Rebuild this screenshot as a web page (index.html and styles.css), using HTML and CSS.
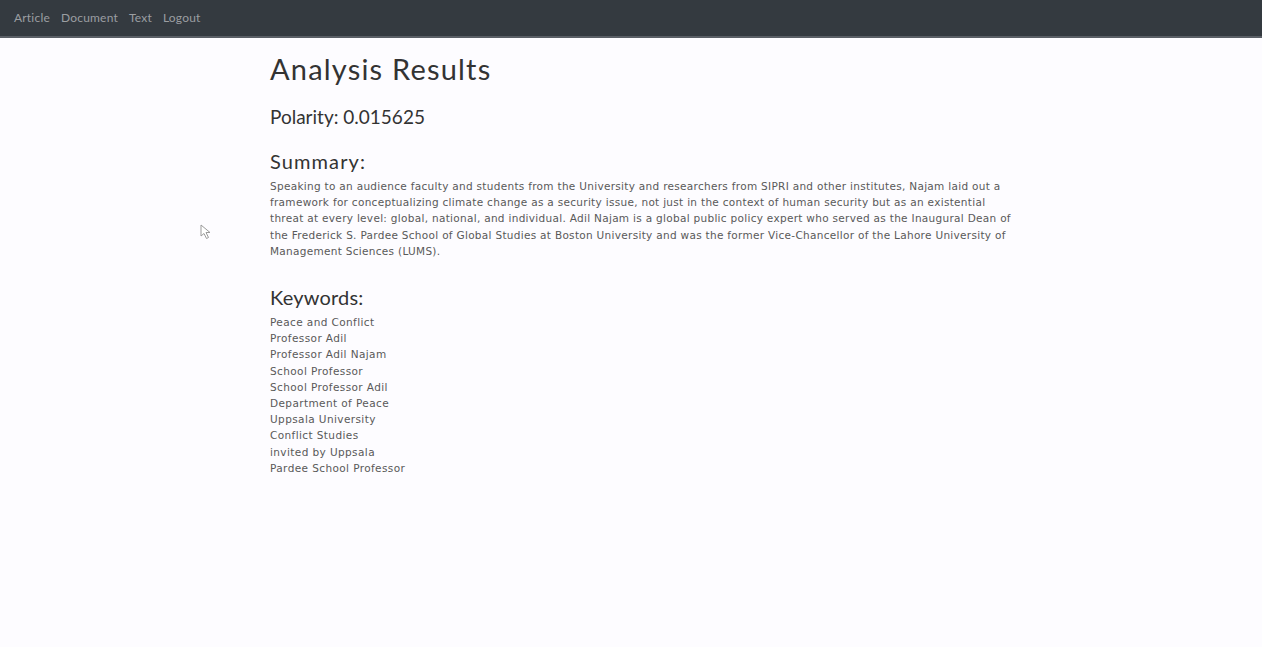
FILE: index.html
```html
<!DOCTYPE html>
<html lang="en">
<head>
<meta charset="utf-8">
<title>Analysis Results</title>
<link rel="stylesheet" href="styles.css">
</head>
<body>
<nav class="navbar">
  <a class="nav-link" href="#">Article</a>
  <a class="nav-link" href="#">Document</a>
  <a class="nav-link" href="#">Text</a>
  <a class="nav-link" href="#">Logout</a>
</nav>
<main class="content">
  <h1 class="title">Analysis Results</h1>
  <h2 class="polarity">Polarity: 0.015625</h2>
  <h3 class="section-title summary-title">Summary:</h3>
  <p class="summary">Speaking to an audience faculty and students from the University and researchers from SIPRI and other institutes, Najam laid out a framework for conceptualizing climate change as a security issue, not just in the context of human security but as an existential threat at every level: global, national, and individual. Adil Najam is a global public policy expert who served as the Inaugural Dean of the Frederick S. Pardee School of Global Studies at Boston University and was the former Vice-Chancellor of the Lahore University of Management Sciences (LUMS).</p>
  <h3 class="section-title keywords-title">Keywords:</h3>
  <ul class="keywords">
    <li>Peace and Conflict</li>
    <li>Professor Adil</li>
    <li>Professor Adil Najam</li>
    <li>School Professor</li>
    <li>School Professor Adil</li>
    <li>Department of Peace</li>
    <li>Uppsala University</li>
    <li>Conflict Studies</li>
    <li>invited by Uppsala</li>
    <li>Pardee School Professor</li>
  </ul>
</main>
<svg class="cursor" width="12" height="16" viewBox="0 0 12 16"><path d="M1 1 L1 12 L4 9.5 L6.5 14.5 L8.5 13.5 L6 8.5 L10 8.5 Z" fill="#fff" stroke="#9a9a9a" stroke-width="1"/></svg>
</body>
</html>
```
FILE: styles.css
```css
html, body {
  margin: 0;
  padding: 0;
}
body {
  background: #fdfcff;
  color: #3a3a3a;
  font-family: "Lato", "Noto Sans", sans-serif;
  min-height: 647px;
  position: relative;
}
.navbar {
  height: 36px;
  background: #343a40;
  border-bottom: 2px solid #5a5f66;
  display: flex;
  align-items: center;
  padding: 0 14px;
  gap: 11px;
  box-sizing: content-box;
}
.nav-link {
  color: #9b9ea2;
  text-decoration: none;
  font-size: 12px;
  letter-spacing: 0.2px;
  margin-top: -1px;
}
.content {
  margin-left: 270px;
  width: 745px;
  padding-top: 13px;
}
.title {
  font-size: 29px;
  font-weight: 400;
  margin: 0;
  line-height: 36px;
  letter-spacing: 1.2px;
  color: #333;
}
.polarity {
  font-size: 19px;
  font-weight: 400;
  margin: 17px 0 0;
  line-height: 26px;
  color: #333;
}
.section-title {
  font-size: 20px;
  font-weight: 400;
  margin: 18px 0 0;
  line-height: 26px;
  color: #333;
}
.summary-title {
  letter-spacing: 1.1px;
}
.summary {
  font-family: "DejaVu Sans", "Noto Sans", sans-serif;
  font-size: 10.5px;
  line-height: 16.2px;
  margin: 4px 0 0;
  color: #595959;
  letter-spacing: 0.3px;
}
.keywords-title {
  margin-top: 25px;
  letter-spacing: 0.2px;
}
.keywords {
  list-style: none;
  margin: 4px 0 0;
  padding: 0;
  font-family: "DejaVu Sans", "Noto Sans", sans-serif;
  font-size: 10.5px;
  line-height: 16.2px;
  color: #595959;
  letter-spacing: 0.4px;
}
.cursor {
  position: absolute;
  left: 200px;
  top: 224px;
}
```
